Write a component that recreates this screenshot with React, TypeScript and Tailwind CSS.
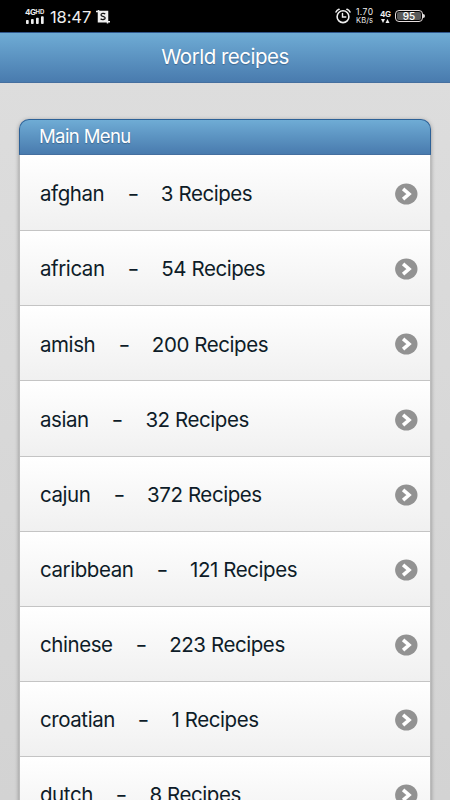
const RECIPES = [
  { name: "afghan", count: 3 },
  { name: "african", count: 54 },
  { name: "amish", count: 200 },
  { name: "asian", count: 32 },
  { name: "cajun", count: 372 },
  { name: "caribbean", count: 121 },
  { name: "chinese", count: 223 },
  { name: "croatian", count: 1 },
  { name: "dutch", count: 8 },
];

function StatusBar() {
  return (
    <div className="flex h-8 shrink-0 items-center justify-between bg-black pl-[25px] pr-[25px] text-[#eee]">
      <div className="flex items-center">
        <div className="w-[20px]">
          <div className="flex h-[7px] items-start leading-[7px] font-bold">
            <span className="text-[8px] tracking-[-0.5px]">4G</span>
            <span className="text-[6px] leading-[5px]">HD</span>
          </div>
          <svg viewBox="0 0 20 8" className="h-2 w-5" fill="currentColor">
            <rect x="1" y="4" width="2.7" height="4" rx="0.8" />
            <rect x="6" y="3" width="2.7" height="5" rx="0.8" />
            <rect x="11" y="1.7" width="2.7" height="6.3" rx="0.8" />
            <rect x="16" y="0.3" width="2.7" height="7.7" rx="0.8" />
          </svg>
        </div>
        <span className="ml-[5px] mt-[2px] w-[42px] text-[16.5px] leading-none tracking-[-0.1px]">18:47</span>
        <svg viewBox="0 0 14 14" className="ml-1 mt-px h-[14px] w-[14px]" fill="none">
          <path d="M2 1.5H11.5V11.5H2Z" fill="#eee" />
          <path d="M0 1.6H11.5V13.5M2.5 0V11.8H14" stroke="#eee" strokeWidth="1.5" />
          <path d="M9.2 4.1C8.2 3 5 3.2 5 5C5 6.8 9.2 6 9.2 8C9.2 9.8 5.8 10 4.6 8.7" stroke="#111" strokeWidth="1.3" />
        </svg>
      </div>
      <div className="flex items-center">
        <svg viewBox="0 0 16 16" className="mr-[5px] h-4 w-4" fill="none" stroke="currentColor" strokeWidth="1.6" strokeLinecap="round">
          <circle cx="8" cy="8.7" r="5.9" />
          <path d="M7.5 5.5V9H10.8" strokeWidth="1.4" />
          <path d="M1 4Q2 2 4 1.3M12 1.3Q14 2 15 4" />
        </svg>
        <div className="w-[24px]">
          <div className="text-[8.5px] leading-[9px] tracking-[0.4px]">1.70</div>
          <div className="text-[7.5px] leading-[8px] tracking-[0.1px]">KB/s</div>
        </div>
        <div className="w-[15px]">
          <div className="text-[8px] leading-[8px] font-bold tracking-[-0.4px]">4G</div>
          <svg viewBox="0 0 10 4" className="mt-[1px] h-1 w-[10px]" fill="currentColor">
            <path d="M1 0H5L3 4ZM5.5 4L7.5 0L9.5 4Z" />
          </svg>
        </div>
        <div className="flex h-3 w-[28px] items-center justify-center rounded-[4px] border border-[#e5dddd] bg-black p-px">
          <div className="flex h-full w-full items-center justify-center rounded-[2px] bg-[#5a5a5a] text-[10px] leading-none font-medium text-white">
            95
          </div>
        </div>
        <div className="h-1 w-[2px] rounded-r bg-[#ddd]" />
      </div>
    </div>
  );
}

function ArrowIcon() {
  return (
    <svg viewBox="0 0 24 24" className="h-6 w-6 shrink-0">
      <ellipse cx="12.3" cy="12" rx="11.2" ry="10.6" fill="#929292" />
      <path d="M9.1 6.9L15 12L9.1 17.1" fill="none" stroke="#fff" strokeWidth="3.6" />
    </svg>
  );
}

export default function App() {
  return (
    <div className="flex h-[800px] w-[450px] flex-col overflow-hidden bg-linear-to-b from-[#dedede] to-[#d3d3d3] font-['Inter','Liberation_Sans',sans-serif]">
      <StatusBar />
      <header className="flex h-[51px] shrink-0 items-center justify-center border-y border-t-[#2f568b] border-b-[#456f9f] bg-linear-to-b from-[#6facd5] to-[#497bae] text-[20.5px] text-white [text-shadow:0_1px_1px_#3e6790]">
        <h1 className="tracking-[-0.5px]">World recipes</h1>
      </header>

      <main className="px-[19px] pt-9">
        <div className="rounded-t-[10px] shadow-[0_1px_4px_rgba(0,0,0,0.35)]">
          <h2 className="flex h-9 items-center rounded-t-[10px] border border-[#2d6197] border-b-[#456f9f] bg-linear-to-b from-[#6facd5] to-[#497bae] pl-[19px] text-[18.5px] tracking-[-0.6px] text-white [text-shadow:0_1px_1px_#3e6790]">
            Main Menu
          </h2>
          <ul className="border-x border-[#bdbdbd]">
            {RECIPES.map((r) => (
              <li
                key={r.name}
                className="flex h-[75.1px] items-center justify-between border-b border-[#c4c4c4] bg-linear-to-b from-white to-[#f0f0f0] pt-[2px] pl-5 pr-3 text-[20.5px] text-[#0e1c28] first:h-[76.3px]"
              >
                <div className="flex items-center pt-px tracking-[-0.43px]">
                  <span>{r.name}</span>
                  <span className="mx-[23.3px] w-[10px] origin-center scale-x-125 text-center">-</span>
                  <span>{r.count} Recipes</span>
                </div>
                <ArrowIcon />
              </li>
            ))}
          </ul>
        </div>
      </main>
    </div>
  );
}
